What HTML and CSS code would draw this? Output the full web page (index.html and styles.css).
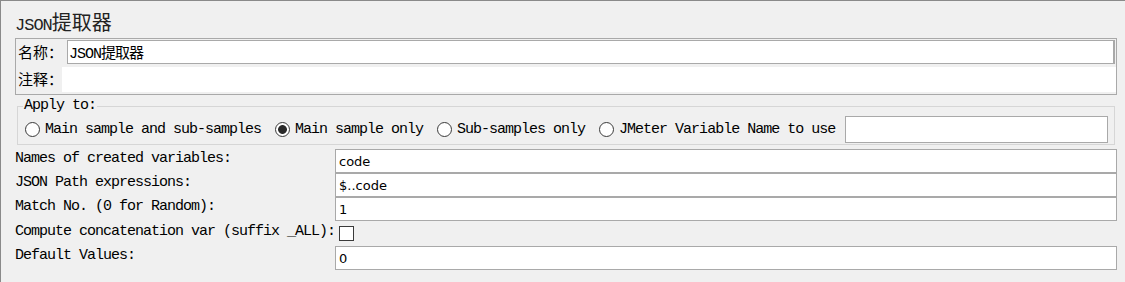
FILE: index.html
```html
<!DOCTYPE html>
<html lang="zh-CN">
<head>
    <meta charset="UTF-8">
    <title>JSON提取器</title>
    <link rel="stylesheet" href="styles.css">
</head>
<body>
    <div class="panel">
        <div class="title">JSON<span class="cjk">提取器</span></div>

        <!-- Имя и комментарий -->
        <div class="name-box">
            <div class="name-row">
                <span class="cjk-label">名称：</span>
                <input class="name-field" type="text" value="JSON提取器">
            </div>
            <div class="comment-row">
                <span class="cjk-label">注释：</span>
                <div class="comment-area"></div>
            </div>
        </div>

        <fieldset class="apply-box">
            <legend>Apply to:</legend>
            <div class="apply-row">
                <label class="opt"><input type="radio" name="scope">Main sample and sub-samples</label>
                <label class="opt"><input type="radio" name="scope" checked>Main sample only</label>
                <label class="opt"><input type="radio" name="scope">Sub-samples only</label>
                <label class="opt last"><input type="radio" name="scope">JMeter Variable Name to use</label>
                <input class="var-field" type="text">
            </div>
        </fieldset>

        <div class="params">
            <div class="param-label">Names of created variables:</div>
            <input class="param-field" type="text" value="code">
            <div class="param-label">JSON Path expressions:</div>
            <input class="param-field" type="text" value="$..code">
            <div class="param-label">Match No. (0 for Random):</div>
            <input class="param-field" type="text" value="1">
            <div class="param-label check-label">Compute concatenation var (suffix _ALL):<input class="check" type="checkbox"></div>
            <div></div>
            <div class="param-label">Default Values:</div>
            <input class="param-field" type="text" value="0">
        </div>
    </div>
</body>
</html>
```

FILE: styles.css
```css
body {
    margin: 0;
    padding: 0;
    background-color: #f0f0f0;
    font-family: "Liberation Mono", "Noto Sans CJK SC", monospace;
    font-size: 15px;
    letter-spacing: -1px;
    color: #000;
}
.panel {
    height: 281px;
    border-top: 1px solid #8a8a8a;
    border-left: 1px solid #8a8a8a;
    padding: 0 8px 0 14px;
}
.title {
    height: 37px;
    line-height: 41px;
    font-size: 17px;
    letter-spacing: -1px;
    color: #222;
}
.cjk {
    font-family: "Noto Sans CJK SC", sans-serif;
    font-size: 20px;
    letter-spacing: 0;
}
.name-box {
    border: 1px solid #a9a9a9;
    padding: 1px 1px 0 0;
    height: 54px;
}
.name-row {
    display: flex;
    height: 24px;
}
.cjk-label {
    font-family: "Noto Sans CJK SC", sans-serif;
    font-size: 15px;
    letter-spacing: 0;
    padding-left: 2px;
    line-height: 23px;
    white-space: nowrap;
}
.name-row .cjk-label {
    width: 49px;
}
.comment-row .cjk-label {
    width: 44px;
}
.name-field {
    flex: 1;
    height: 24px;
    box-sizing: border-box;
    border: 1px solid #a9a9a9;
    border-right-width: 2px;
    padding: 0 1px;
    margin: 0;
    font-family: "Liberation Mono", "Noto Sans CJK SC", monospace;
    font-size: 15px;
    letter-spacing: -1px;
    color: #000;
    outline: none;
}
.comment-row {
    display: flex;
    height: 25px;
    margin-top: 3px;
    margin-right: -1px;
}
.comment-area {
    flex: 1;
    background-color: #fff;
}
.apply-box {
    margin: 4px 2px 0 2px;
    padding: 2px 3px 1px 7px;
    border: 1px solid #d6d6d6;
}
.apply-box legend {
    padding: 0 1px;
    margin-left: -2px;
    line-height: 14px;
}
.apply-row {
    display: flex;
    align-items: center;
    height: 28px;
}
.opt {
    display: flex;
    align-items: center;
    gap: 5px;
    margin-right: 14px;
    white-space: nowrap;
}
.opt.last {
    margin-right: 10px;
}
.opt input, .check {
    appearance: none;
    flex-shrink: 0;
    margin: 0;
    width: 15px;
    height: 15px;
    border: 1px solid #3a3a3a;
    background-color: #fff;
    box-sizing: border-box;
}
.opt input {
    border-radius: 50%;
}
.opt input:checked {
    background: radial-gradient(circle, #2a2a2a 0 4px, #fff 4.8px);
}
.var-field {
    flex: 1;
    height: 27px;
    box-sizing: border-box;
    border: 1px solid #a9a9a9;
    margin: 0 3px 0 0;
    outline: none;
}
.params {
    display: grid;
    grid-template-columns: 320px 1fr;
    grid-template-rows: 24px 24px 24px 25px 24px;
    margin-top: 4px;
}
.param-label {
    line-height: 20px;
    white-space: nowrap;
}
.check-label {
    display: flex;
    align-items: flex-start;
    margin-top: 1px;
}
.check {
    margin-top: 4px;
    margin-left: 4px;
}
.param-field {
    height: 24px;
    box-sizing: border-box;
    border: 1px solid #a9a9a9;
    padding: 0 3px;
    margin: 0;
    font-family: "DejaVu Sans", sans-serif;
    font-size: 13px;
    letter-spacing: 0;
    color: #000;
    outline: none;
}
```
